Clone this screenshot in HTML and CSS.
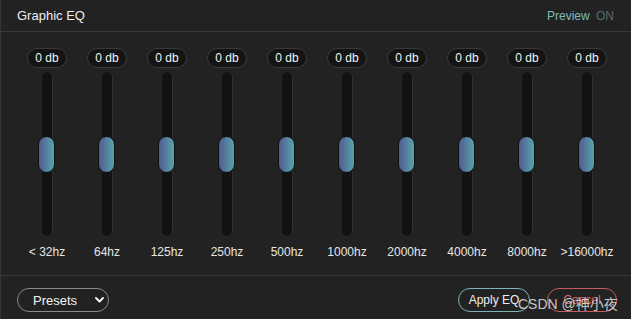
FILE: index.html
```html
<!DOCTYPE html>
<html>
	<head>
		<meta charset="UTF-8">
		<title>Graphic EQ</title>
		<link rel="stylesheet" href="styles.css">
	</head>
	<body>
		<div class="eq">
			<div class="head">
				<span class="title">Graphic EQ</span>
				<span class="preview">Preview <em>ON</em></span>
			</div>

			<div class="bands">
				<div class="band"><span class="db">0 db</span><span class="track"><span class="knob"></span></span><span class="hz">&lt; 32hz</span></div>
				<div class="band"><span class="db">0 db</span><span class="track"><span class="knob"></span></span><span class="hz">64hz</span></div>
				<div class="band"><span class="db">0 db</span><span class="track"><span class="knob"></span></span><span class="hz">125hz</span></div>
				<div class="band"><span class="db">0 db</span><span class="track"><span class="knob"></span></span><span class="hz">250hz</span></div>
				<div class="band"><span class="db">0 db</span><span class="track"><span class="knob"></span></span><span class="hz">500hz</span></div>
				<div class="band"><span class="db">0 db</span><span class="track"><span class="knob"></span></span><span class="hz">1000hz</span></div>
				<div class="band"><span class="db">0 db</span><span class="track"><span class="knob"></span></span><span class="hz">2000hz</span></div>
				<div class="band"><span class="db">0 db</span><span class="track"><span class="knob"></span></span><span class="hz">4000hz</span></div>
				<div class="band"><span class="db">0 db</span><span class="track"><span class="knob"></span></span><span class="hz">8000hz</span></div>
				<div class="band"><span class="db">0 db</span><span class="track"><span class="knob"></span></span><span class="hz">&gt;16000hz</span></div>
			</div>

			<div class="foot">
				<div class="presets">
					<span>Presets</span>
					<svg width="9" height="6" viewBox="0 0 9 6"><path d="M1 1 L4.5 4.5 L8 1" fill="none" stroke="#fff" stroke-width="1.8" stroke-linecap="round" stroke-linejoin="round"/></svg>
				</div>
				<div class="btns">
					<span class="btn apply">Apply EQ</span>
					<span class="btn cancel">Cancel</span>
				</div>
			</div>

			<span class="mark">CSDN @神小夜</span>
		</div>
	</body>
</html>
```

FILE: styles.css
```css
html,body{margin:0;padding:0;background:#222;}
body{font-family:"Liberation Sans",Arial,"Noto Sans CJK SC",sans-serif;color:#eee;}

.eq{position:relative;width:631px;height:319px;box-sizing:border-box;border-left:1px solid #363636;background:#222;}

.head{height:32px;box-sizing:border-box;border-bottom:1px solid #3a3a3a;
display:flex;align-items:center;justify-content:space-between;padding:0 17px 0 16px;}
.head .title{font-size:13px;color:#eee;}
.head .preview{font-size:12px;color:#7fbcbc;}
.head .preview em{font-style:normal;color:#566b6b;margin-left:3px;}

.bands{display:flex;height:244px;box-sizing:border-box;padding:16px 0 0 16px;border-bottom:1px solid #3a3a3a;}
.band{width:60px;display:flex;flex-direction:column;align-items:center;}
.db{width:40px;height:20px;box-sizing:border-box;border:1px solid #3a3a3a;border-radius:10px;background:#141414;
font-size:12px;line-height:18px;text-align:center;color:#f2f2f2;}
.track{position:relative;margin-top:4px;width:11px;height:164px;box-sizing:border-box;
background:#121212;border-right:1px solid #303030;border-radius:6px;}
.knob{position:absolute;left:-4px;top:64px;width:17px;height:37px;box-sizing:border-box;
border:1px solid #0e0e0e;border-radius:9px;background:linear-gradient(to right,#535a92,#57a4ab);}
.hz{margin-top:9px;font-size:12px;line-height:14px;color:#e6e6e6;}

.foot{display:flex;justify-content:space-between;align-items:flex-start;padding:12px 14px 0 16px;}
.presets{width:92px;height:24px;box-sizing:border-box;border:1px solid #8a8a8a;border-radius:12px;
display:flex;align-items:center;justify-content:space-between;padding:0 4px 0 15px;font-size:13px;color:#f2f2f2;}
.presets svg{display:block;}
.btns{display:flex;gap:17px;}
.btn{display:block;height:24px;box-sizing:border-box;border-radius:12px;font-size:12px;line-height:22px;text-align:center;}
.apply{width:72px;border:1px solid #7fb2ba;color:#f0f0f0;}
.cancel{width:70px;border:1px solid #c45e5e;color:#d86a6a;}

.mark{position:absolute;left:517px;top:293px;font-size:14px;color:rgba(240,240,240,0.8);white-space:nowrap;}
```
